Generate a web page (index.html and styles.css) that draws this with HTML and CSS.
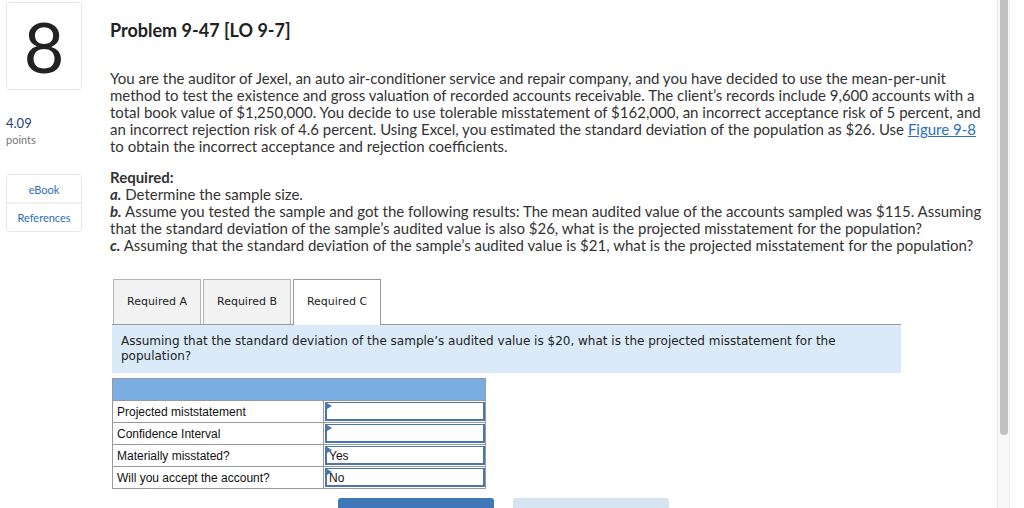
FILE: index.html
```html
<!DOCTYPE html>
<html>
<head>
<meta charset="utf-8">
<link rel="stylesheet" href="styles.css">
</head>
<body>
<div class="page">
  <aside class="sidebar">
    <div class="qnum">8</div>
    <div class="score">4.09</div>
    <div class="points">points</div>
    <div class="links">
      <div class="link">eBook</div>
      <div class="link">References</div>
    </div>
  </aside>
  <main class="main">
    <h1 class="title">Problem 9-47 [LO 9-7]</h1>
    <p class="para">You are the auditor of Jexel, an auto air-conditioner service and repair company, and you have decided to use the mean-per-unit<br>method to test the existence and gross valuation of recorded accounts receivable. The client’s records include 9,600 accounts with a<br>total book value of $1,250,000. You decide to use tolerable misstatement of $162,000, an incorrect acceptance risk of 5 percent, and<br>an incorrect rejection risk of 4.6 percent. Using Excel, you estimated the standard deviation of the population as $26. Use <a class="fig" href="#">Figure 9-8</a><br>to obtain the incorrect acceptance and rejection coefficients.</p>
    <div class="req">
      <div class="req-head">Required:</div>
      <div><b><i>a.</i></b> Determine the sample size.</div>
      <div><b><i>b.</i></b> Assume you tested the sample and got the following results: The mean audited value of the accounts sampled was $115. Assuming<br>that the standard deviation of the sample’s audited value is also $26, what is the projected misstatement for the population?</div>
      <div><b><i>c.</i></b> Assuming that the standard deviation of the sample’s audited value is $21, what is the projected misstatement for the population?</div>
    </div>
    <div class="work">
      <div class="tabs">
        <div class="tab">Required A</div>
        <div class="tab">Required B</div>
        <div class="tab active">Required C</div>
      </div>
      <div class="instr">Assuming that the standard deviation of the sample’s audited value is $20, what is the projected misstatement for the<br>population?</div>
      <table class="grid">
        <tr class="head"><td colspan="2"></td></tr>
        <tr><td class="lbl">Projected miststatement</td><td class="inp"><div class="box"><span class="flag"></span></div></td></tr>
        <tr><td class="lbl">Confidence Interval</td><td class="inp"><div class="box"><span class="flag"></span></div></td></tr>
        <tr><td class="lbl">Materially misstated?</td><td class="inp"><div class="box"><span class="flag"></span>Yes</div></td></tr>
        <tr><td class="lbl">Will you accept the account?</td><td class="inp"><div class="box"><span class="flag"></span>No</div></td></tr>
      </table>
      <div class="navs">
        <div class="btn prev">&lt; Required B</div>
        <div class="btn next">Required C &gt;</div>
      </div>
    </div>
  </main>
</div>
<div class="scrollbar"><div class="thumb"></div></div>
</body>
</html>
```
FILE: styles.css
```css
html, body {
  margin: 0;
  padding: 0;
  background: #fff;
  overflow: hidden;
  height: 508px;
}
body {
  font-family: "Lato", "Open Sans", sans-serif;
  color: #333;
}
.page {
  display: flex;
  padding-left: 6px;
  padding-top: 2px;
}
.sidebar {
  width: 76px;
  flex: none;
}
.qnum {
  height: 86px;
  border: 1px solid #e6e6e6;
  border-radius: 4px;
  display: flex;
  align-items: center;
  justify-content: center;
  font-size: 70px;
  font-weight: 400;
  color: #222;
  line-height: 1;
}
.score {
  margin-top: 25px;
  font-size: 13px;
  color: #1d3f74;
  line-height: 16px;
}
.points {
  font-size: 11px;
  color: #777;
  line-height: 14px;
  margin-top: 2px;
}
.links {
  margin-top: 27px;
  border: 1px solid #e6e6e6;
  border-radius: 4px;
}
.link {
  height: 27px;
  line-height: 29px;
  text-align: center;
  font-size: 11px;
  color: #2c6fbd;
}
.link + .link {
  border-top: 2px solid #f0f0f0;
  line-height: 27px;
}
.main {
  margin-left: 28px;
  width: 880px;
  flex: none;
}
.title {
  margin: 18px 0 0;
  font-size: 18px;
  font-weight: 700;
  color: #222;
  line-height: 20px;
}
.para {
  margin: 30px 0 0;
  font-size: 15px;
  line-height: 17px;
}
.fig {
  color: #2c6fbd;
}
.req {
  margin-top: 14px;
  font-size: 15px;
  line-height: 17px;
}
.req-head {
  font-weight: 700;
}
.work {
  margin-top: 25px;
  margin-left: 2px;
  width: 789px;
}
.tabs {
  display: flex;
  gap: 2px;
  padding-left: 1px;
  border-bottom: 1px solid #999;
  font-family: "DejaVu Sans", Verdana, sans-serif;
  font-size: 11px;
  color: #222;
}
.tab {
  width: 86px;
  height: 44px;
  line-height: 44px;
  text-align: center;
  background: #f2f2f2;
  border: 1px solid #b5b5b5;
  border-bottom: none;
}
.tab.active {
  background: #fff;
  height: 45px;
  margin-bottom: -1px;
  border-color: #999;
}
.instr {
  background: #dbeaf8;
  padding: 9px 9px 9px;
  font-family: "DejaVu Sans", Verdana, sans-serif;
  font-size: 12px;
  line-height: 15px;
  color: #222;
}
.grid {
  margin-top: 5px;
  border-collapse: collapse;
  width: 374px;
  font-family: "Liberation Sans", Arial, sans-serif;
  font-size: 12px;
  color: #111;
}
.grid tr {
  height: 22px;
}
.grid td {
  border: 1px solid #999;
  padding: 0;
}
.grid .head td {
  background: #7aaee3;
  border-color: #999;
}
.lbl {
  width: 206px;
  padding-left: 4px !important;
}
.inp {
  padding: 1px 0 1px 1px !important;
}
.box {
  position: relative;
  height: 16px;
  border: 2px solid #4a75b0;
  border-width: 1px 2px 2px 2px;
  line-height: 18px;
  padding-left: 2px;
  background: #fff;
  overflow: hidden;
}
.flag {
  position: absolute;
  left: 0;
  top: 0;
  width: 0;
  height: 0;
  border-top: 3px solid transparent;
  border-bottom: 3px solid transparent;
  border-left: 5px solid #4a75b0;
}
.navs {
  display: flex;
  gap: 19px;
  margin-top: 9px;
  margin-left: 226px;
}
.btn {
  width: 156px;
  height: 34px;
  border-radius: 3px;
  text-align: center;
  line-height: 34px;
  font-size: 13px;
}
.prev {
  background: #3f77b9;
  color: #fff;
}
.next {
  background: #d6e3f1;
  color: #fff;
}
.scrollbar {
  position: fixed;
  top: 0;
  left: 997px;
  width: 13px;
  height: 508px;
  background: #f8f8f8;
  border-left: 1px solid #ececec;
  border-right: 1px solid #ececec;
  box-sizing: border-box;
}
.thumb {
  position: absolute;
  left: 2px;
  top: -10px;
  width: 8px;
  height: 445px;
  border-radius: 4px;
  background: #c1c1c1;
}
```
